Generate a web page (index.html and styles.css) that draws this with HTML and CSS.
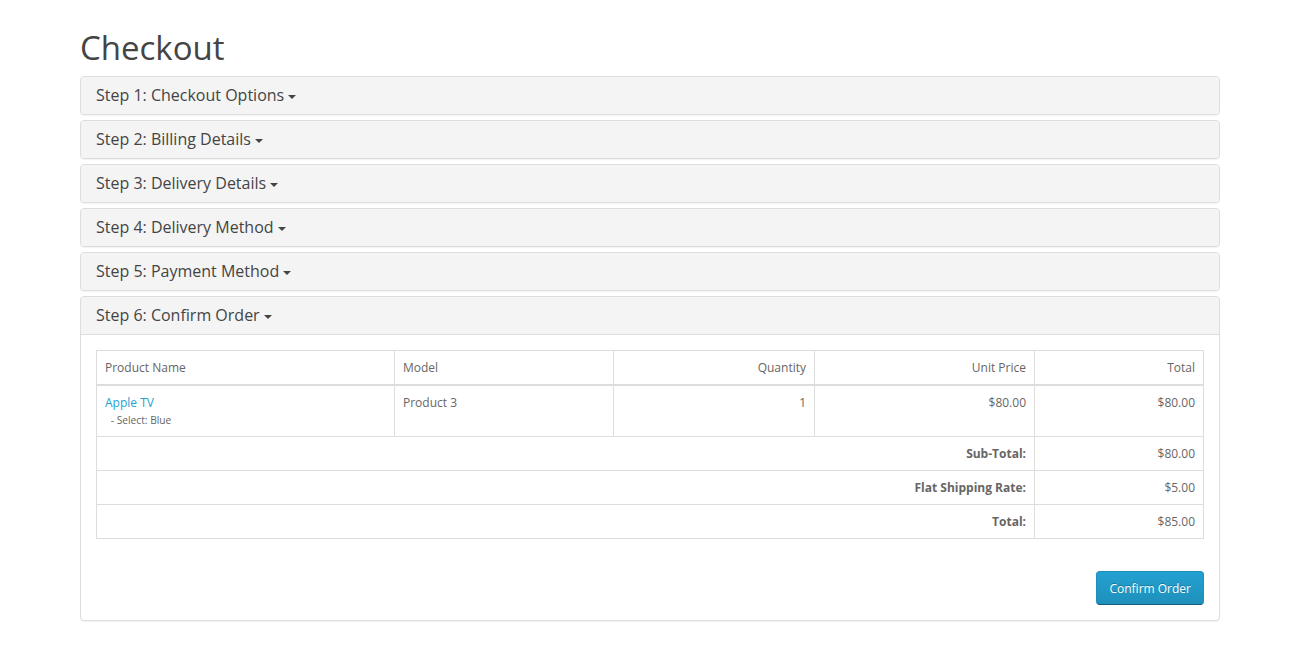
FILE: index.html
```html
<!DOCTYPE html>
<html lang="en">
<head>
    <meta charset="UTF-8">
    <title>Checkout</title>
    <link rel="stylesheet" href="styles.css">
</head>
<body>
    <div class="container">
        <h1>Checkout</h1>

        <div class="panel">
            <div class="panel-heading"><h4 class="panel-title">Step 1: Checkout Options <i class="caret"></i></h4></div>
        </div>
        <div class="panel">
            <div class="panel-heading"><h4 class="panel-title">Step 2: Billing Details <i class="caret"></i></h4></div>
        </div>
        <div class="panel">
            <div class="panel-heading"><h4 class="panel-title">Step 3: Delivery Details <i class="caret"></i></h4></div>
        </div>
        <div class="panel">
            <div class="panel-heading"><h4 class="panel-title">Step 4: Delivery Method <i class="caret"></i></h4></div>
        </div>
        <div class="panel">
            <div class="panel-heading"><h4 class="panel-title">Step 5: Payment Method <i class="caret"></i></h4></div>
        </div>

        <!-- Paso final: confirmar pedido -->
        <div class="panel">
            <div class="panel-heading"><h4 class="panel-title">Step 6: Confirm Order <i class="caret"></i></h4></div>
            <div class="panel-body">
                <table class="order-table">
                    <thead>
                        <tr>
                            <th class="col-name">Product Name</th>
                            <th class="col-model">Model</th>
                            <th class="col-qty text-right">Quantity</th>
                            <th class="col-price text-right">Unit Price</th>
                            <th class="col-total text-right">Total</th>
                        </tr>
                    </thead>
                    <tbody>
                        <tr class="product-row">
                            <td><a href="#">Apple TV</a><br>&nbsp;<small> - Select: Blue</small></td>
                            <td>Product 3</td>
                            <td class="text-right">1</td>
                            <td class="text-right">$80.00</td>
                            <td class="text-right">$80.00</td>
                        </tr>
                    </tbody>
                    <tfoot>
                        <tr>
                            <td colspan="4" class="text-right"><strong>Sub-Total:</strong></td>
                            <td class="text-right">$80.00</td>
                        </tr>
                        <tr>
                            <td colspan="4" class="text-right"><strong>Flat Shipping Rate:</strong></td>
                            <td class="text-right">$5.00</td>
                        </tr>
                        <tr>
                            <td colspan="4" class="text-right"><strong>Total:</strong></td>
                            <td class="text-right">$85.00</td>
                        </tr>
                    </tfoot>
                </table>
                <div class="buttons">
                    <button class="btn-primary" type="button">Confirm Order</button>
                </div>
            </div>
        </div>
    </div>
</body>
</html>
```

FILE: styles.css
```css
:root {
    --text-color: #666;
    --heading-color: #444;
    --border-color: #ddd;
    --link-color: #23a1d1;
}

* {
    margin: 0;
    padding: 0;
    box-sizing: border-box;
}

body {
    font-family: 'Open Sans', sans-serif;
    font-size: 12px;
    line-height: 1.42857;
    color: var(--text-color);
    background: #fff;
}

.container {
    width: 1140px;
    margin-left: 80px;
    padding-top: 30px;
}

h1 {
    font-size: 33px;
    font-weight: 400;
    line-height: 36px;
    color: var(--heading-color);
    margin-bottom: 10px;
}

.panel {
    border: 1px solid var(--border-color);
    border-radius: 4px;
    background: #fff;
    box-shadow: 0 1px 1px rgba(0, 0, 0, 0.05);
    margin-bottom: 5px;
}

.panel-heading {
    background-color: #f4f4f4;
    padding: 10px 15px;
    border-radius: 3px;
}

.panel-heading + .panel-body {
    border-top: 1px solid var(--border-color);
}

.panel .panel-heading:not(:last-child) {
    border-radius: 3px 3px 0 0;
}

.panel-title {
    font-size: 16px;
    font-weight: 400;
    line-height: 17px;
    color: var(--heading-color);
}

.caret {
    display: inline-block;
    width: 0;
    height: 0;
    vertical-align: middle;
    border-top: 4px solid;
    border-left: 4px solid transparent;
    border-right: 4px solid transparent;
}

.panel-body {
    padding: 15px;
}

.order-table {
    width: 100%;
    border-collapse: collapse;
    border: 1px solid var(--border-color);
    margin-bottom: 20px;
}

.order-table th,
.order-table td {
    border: 1px solid var(--border-color);
    padding: 8px;
    line-height: 17px;
    vertical-align: top;
    font-weight: 400;
    text-align: left;
}

.order-table thead th {
    border-bottom-width: 2px;
}

.col-name { width: 298px; }
.col-model { width: 219px; }
.col-qty { width: 201px; }
.col-price { width: 220px; }

.order-table .text-right {
    text-align: right;
}

.order-table a {
    color: var(--link-color);
    text-decoration: none;
}

.order-table small {
    font-size: 85%;
    line-height: 1;
}

.order-table strong {
    font-weight: 700;
}

.buttons {
    display: flex;
    justify-content: flex-end;
    margin-top: 32px;
}

.btn-primary {
    font-family: 'Open Sans', sans-serif;
    font-size: 12px;
    line-height: 17px;
    padding: 7.5px 12px;
    color: #fff;
    text-shadow: 0 -1px 0 rgba(0, 0, 0, 0.25);
    background-color: #229ac8;
    background-image: linear-gradient(to bottom, #23a1d1, #1f90bb);
    border: 1px solid;
    border-color: #1f90bb #1f90bb #145e7a;
    border-radius: 4px;
    cursor: pointer;
}
```
